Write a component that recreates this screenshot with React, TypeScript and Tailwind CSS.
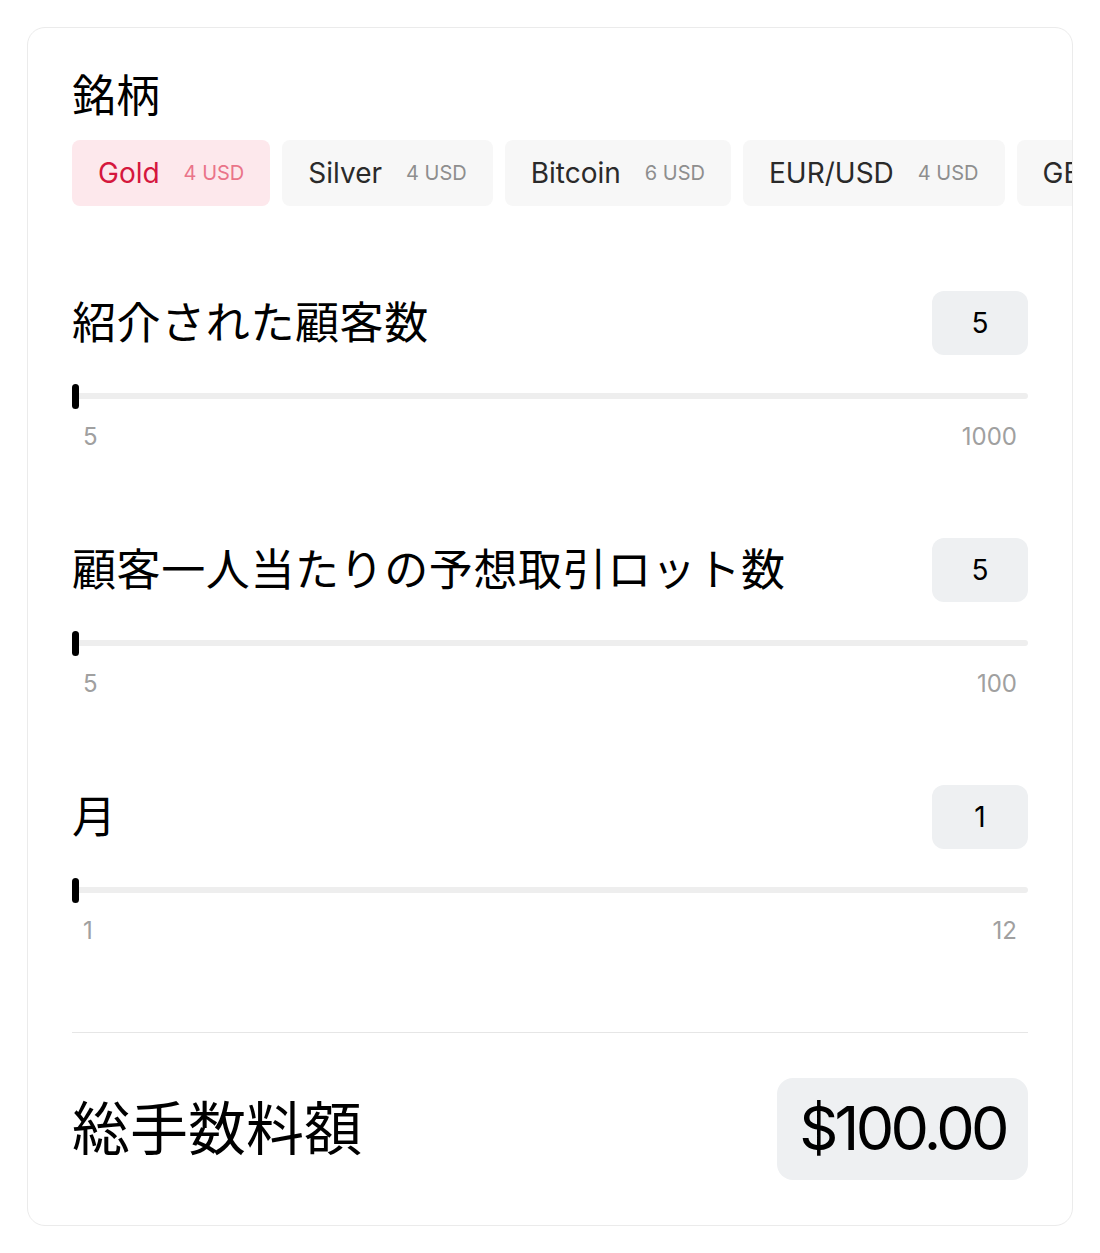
import { useState } from "react";

type Symbol = { name: string; fee: string };

const SYMBOLS: Symbol[] = [
  { name: "Gold", fee: "4 USD" },
  { name: "Silver", fee: "4 USD" },
  { name: "Bitcoin", fee: "6 USD" },
  { name: "EUR/USD", fee: "4 USD" },
  { name: "GBP/USD", fee: "4 USD" },
];

function SliderRow({
  label,
  value,
  min,
  max,
  onChange,
}: {
  label: string;
  value: number;
  min: number;
  max: number;
  onChange: (v: number) => void;
}) {
  const pct = ((value - min) / (max - min)) * 100;
  return (
    <section>
      <div className="flex h-16 items-center justify-between">
        <h2 className="text-[44px] leading-none tracking-[0.6px] text-black">{label}</h2>
        <div className="flex h-16 w-24 items-center justify-center rounded-xl bg-[#eef0f2] text-[28px] text-black">
          {value}
        </div>
      </div>
      <div className="relative mt-[29px] h-[25px]">
        <div className="absolute left-0 right-0 top-[9px] h-[6px] rounded-full bg-[#eeeeee]" />
        <div
          className="absolute top-0 h-[25px] w-[7px] rounded-full bg-black"
          style={{ left: `calc(${pct}% - ${(pct / 100) * 7}px)` }}
        />
        <input
          type="range"
          min={min}
          max={max}
          value={value}
          onChange={(e) => onChange(Number(e.target.value))}
          className="absolute inset-0 w-full cursor-pointer opacity-0"
        />
      </div>
      <div className="mt-4 flex justify-between px-[11px] text-[24px] leading-6 text-[#a0a0a0]">
        <span>{min}</span>
        <span>{max}</span>
      </div>
    </section>
  );
}

export default function App() {
  const [active, setActive] = useState("Gold");
  const [clients, setClients] = useState(5);
  const [lots, setLots] = useState(5);
  const [months, setMonths] = useState(1);

  return (
    <div
      className="min-h-screen bg-white p-[27px]"
      style={{ fontFamily: "Inter, 'Noto Sans CJK JP', sans-serif" }}
    >
      <div className="overflow-hidden rounded-[18px] border border-[#ebebeb] bg-white px-[44px] pb-[45px] pt-[42px]">
        <h1 className="text-[44px] leading-[53px] text-black">銘柄</h1>
        <div className="mt-[17px] flex gap-3 whitespace-nowrap">
          {SYMBOLS.map((s) => {
            const on = s.name === active;
            return (
              <button
                key={s.name}
                type="button"
                onClick={() => setActive(s.name)}
                className={`flex h-[66px] shrink-0 items-center gap-6 rounded-lg px-[26px] ${
                  on ? "bg-[#fde8ec]" : "bg-[#f7f7f7]"
                }`}
              >
                <span className={`text-[28px] ${on ? "text-[#d5173d]" : "text-[#2a2a2a]"}`}>
                  {s.name}
                </span>
                <span className={`text-[20px] ${on ? "text-[#ea7489]" : "text-[#8e8e8e]"}`}>
                  {s.fee}
                </span>
              </button>
            );
          })}
        </div>

        <div className="mt-[85px] flex flex-col gap-[89px]">
          <SliderRow label="紹介された顧客数" value={clients} min={5} max={1000} onChange={setClients} />
          <SliderRow label="顧客一人当たりの予想取引ロット数" value={lots} min={5} max={100} onChange={setLots} />
          <SliderRow label="月" value={months} min={1} max={12} onChange={setMonths} />
        </div>

        <div className="mt-[89px] border-t border-[#e6e6e6]" />

        <div className="mt-[45px] flex items-center justify-between">
          <h2 className="text-[58px] leading-none text-black">総手数料額</h2>
          <div className="flex h-[102px] w-[251px] items-center justify-center rounded-2xl bg-[#eef0f2] text-[61px] tracking-[-0.06em] text-black">
            $100.00
          </div>
        </div>
      </div>
    </div>
  );
}
